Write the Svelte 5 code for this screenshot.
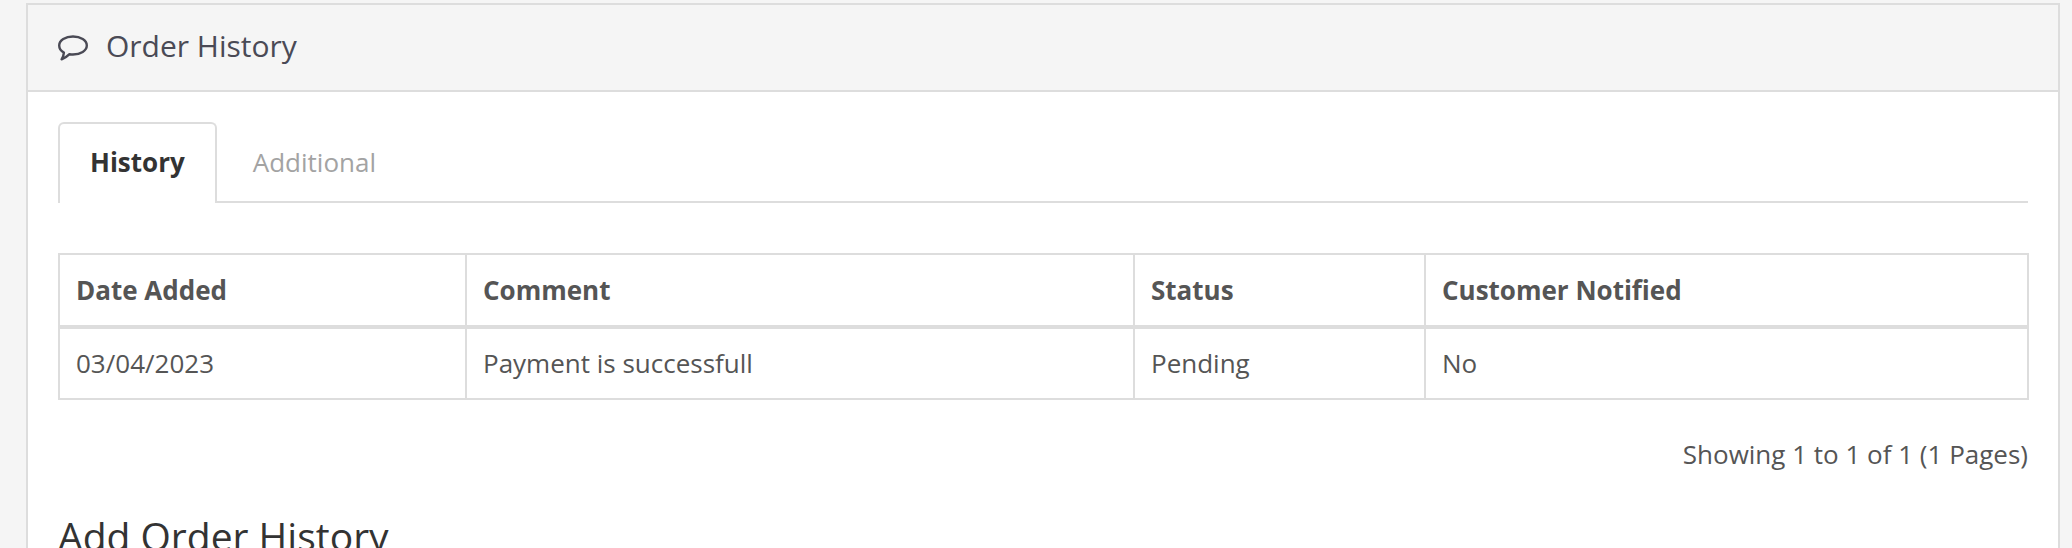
<script>
  const columns = [
    { label: "Date Added", width: 407 },
    { label: "Comment", width: 668 },
    { label: "Status", width: 291 },
    { label: "Customer Notified", width: 603 },
  ];
  const rows = [["03/04/2023", "Payment is successfull", "Pending", "No"]];
</script>

<div class="page">
  <div class="panel">
    <div class="panel-heading">
      <svg class="icon" width="30" height="27" viewBox="0 0 30 27" fill="none" stroke="currentColor" stroke-width="2.4">
        <path d="M15 1.500c7.600 0 13.800 3.900 13.800 9s-6.200 9-13.800 9c-1.200 0-2.400-.1-3.500-.3-1.900 2-4.300 3.600-7.900 5.100 1.300-2 2.100-3.900 2.300-6.700C3 16.100 1.200 13.500 1.200 10.500c0-5.100 6.200-9 13.800-9z" stroke-linejoin="round" />
      </svg>
      <h3>Order History</h3>
    </div>
    <div class="panel-body">
      <ul class="tabs">
        <li class="active"><span>History</span></li>
        <li><span>Additional</span></li>
      </ul>
      <table>
        <colgroup>
          {#each columns as col}
            <col style="width: {col.width}px" />
          {/each}
        </colgroup>
        <thead>
          <tr>
            {#each columns as col}
              <th>{col.label}</th>
            {/each}
          </tr>
        </thead>
        <tbody>
          {#each rows as row}
            <tr>
              {#each row as cell}
                <td>{cell}</td>
              {/each}
            </tr>
          {/each}
        </tbody>
      </table>
      <p class="results">Showing 1 to 1 of 1 (1 Pages)</p>
      <h2>Add Order History</h2>
    </div>
  </div>
</div>

<style>
  :global(body) {
    margin: 0;
    background: #f5f5f5;
    overflow: hidden;
  }
  .page {
    height: 548px;
    box-sizing: border-box;
    padding: 3px 12px 0 26px;
    overflow: hidden;
    font-family: "Open Sans", sans-serif;
    font-size: 26px;
    color: #555;
  }
  .panel {
    height: 700px;
    background: #fff;
    border: 2px solid #ddd;
    border-bottom: 0;
    box-sizing: border-box;
  }
  .panel-heading {
    height: 87px;
    box-sizing: border-box;
    display: flex;
    align-items: center;
    gap: 18px;
    padding: 0 30px 5px;
    background: #f5f5f5;
    border-bottom: 2px solid #ddd;
    color: #4a4a55;
  }
  .icon {
    flex: none;
    margin-top: 7px;
  }
  h3 {
    margin: 0;
    font-size: 30px;
    font-weight: 400;
  }
  .panel-body {
    padding: 30px;
  }
  .tabs {
    display: flex;
    list-style: none;
    margin: 0 0 50px;
    padding: 0;
    height: 81px;
    box-sizing: border-box;
    border-bottom: 2px solid #ddd;
  }
  .tabs li {
    height: 81px;
    box-sizing: border-box;
    padding: 20px 30px 0;
    border: 2px solid transparent;
    border-bottom: 0;
    margin-right: 4px;
    color: #a3a3a3;
    line-height: 36px;
  }
  .tabs li.active {
    background: #fff;
    border-color: #ddd;
    border-radius: 6px 6px 0 0;
    color: #333;
    font-weight: 700;
  }
  table {
    width: 1969px;
    table-layout: fixed;
    border-collapse: collapse;
  }
  th,
  td {
    border: 2px solid #ddd;
    padding: 0 16px;
    text-align: left;
    line-height: 36px;
  }
  th {
    height: 70px;
    border-bottom-width: 4px;
    font-weight: 700;
  }
  td {
    height: 67px;
    padding-bottom: 2px;
  }
  .results {
    margin: 0;
    padding-top: 36px;
    text-align: right;
    line-height: 36px;
  }
  h2 {
    margin: 42px 0 0;
    font-size: 39px;
    font-weight: 400;
    line-height: 44px;
    color: #333;
  }
</style>
